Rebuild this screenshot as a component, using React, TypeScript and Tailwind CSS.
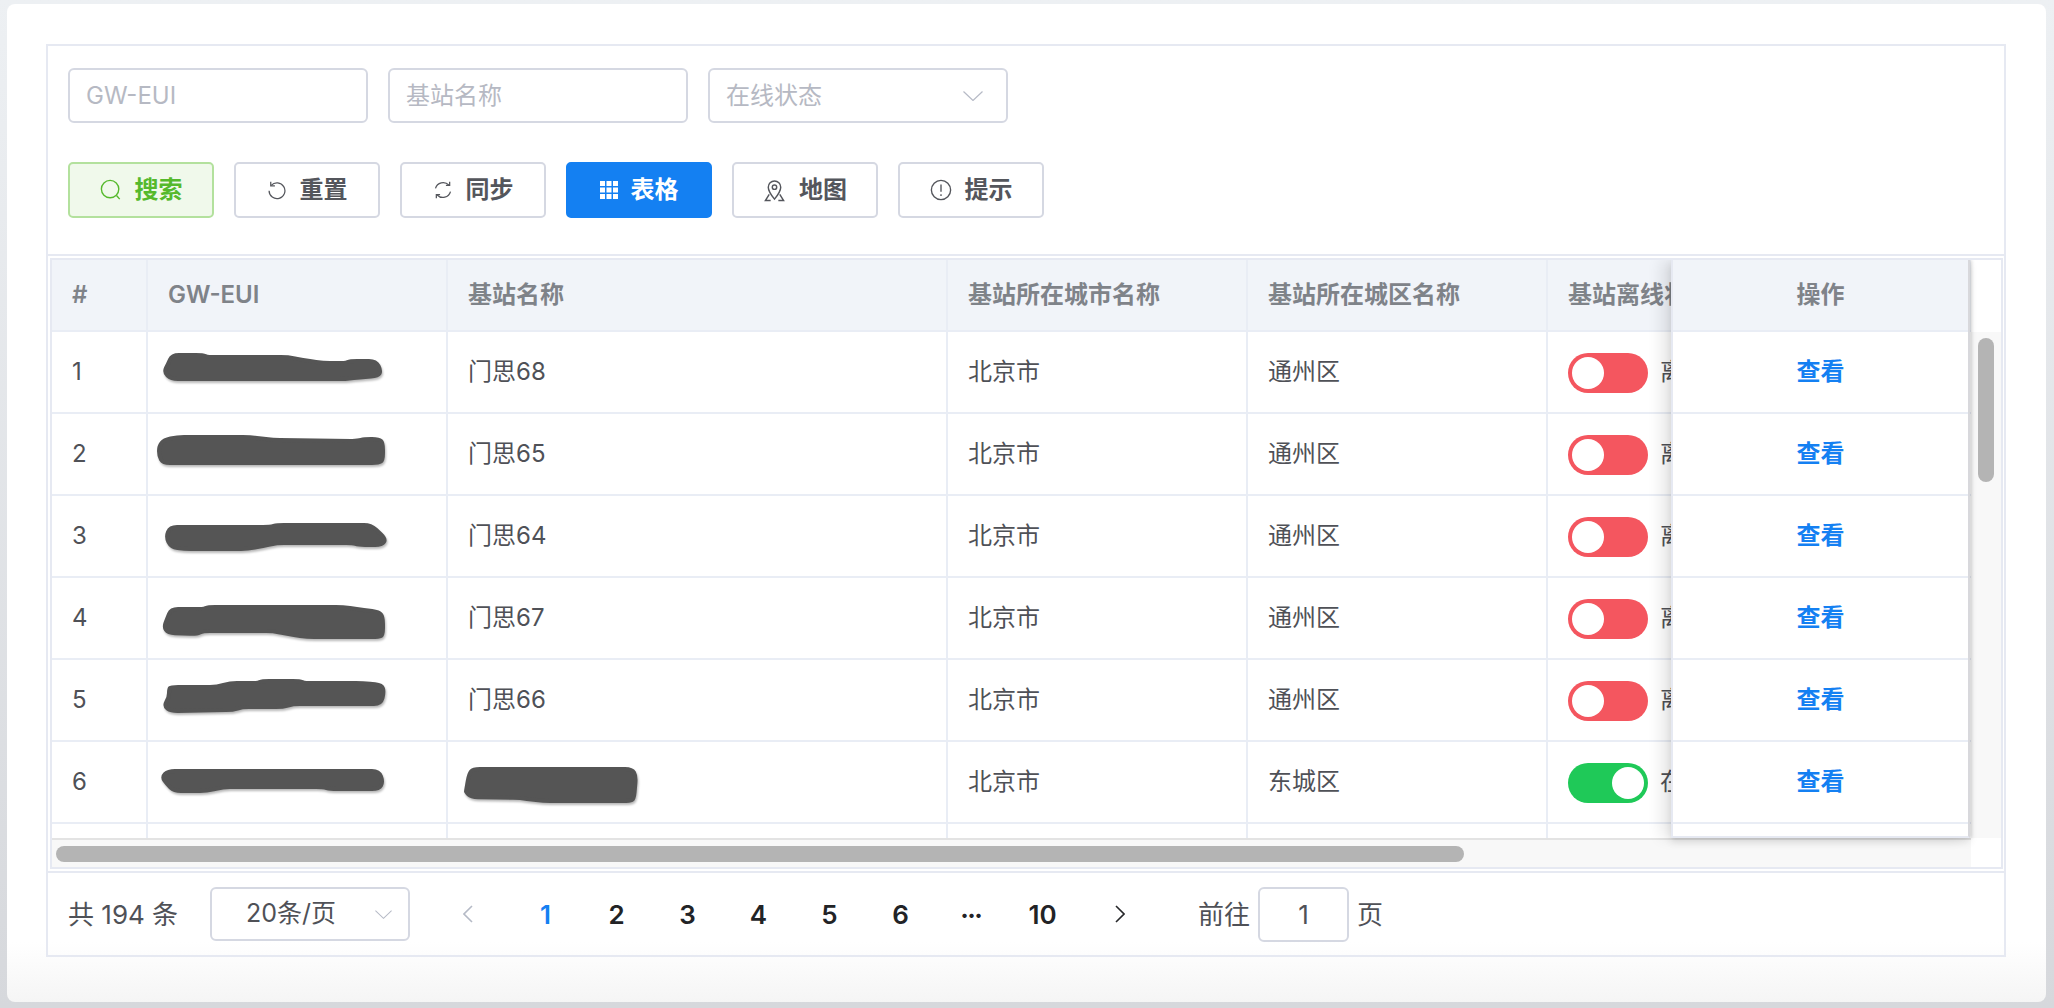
import type { ReactNode } from 'react'

const ROWS = [
  { no: 1, name: '门思68', city: '北京市', area: '通州区', online: false, eui: 'M172 356 L203 356 L208 358 L288 358 L303 361 L323 364 L345 364 L350 362 L376 362 L381 372 L378 377 L353 379 L346 380 L171 380 L164 373 L168 365 Z' },
  { no: 2, name: '门思65', city: '北京市', area: '通州区', online: false, eui: 'M159 447 L164 441 L177 438 L250 438 L273 441 L358 442 L364 440 L379 440 L383 444 L383 461 L379 464 L163 464 L159 457 Z' },
  { no: 3, name: '门思64', city: '北京市', area: '通州区', online: false, eui: 'M166 538 L170 528 L270 528 L277 526 L371 526 L386 540 L382 546 L358 546 L353 544 L277 544 L263 547 L248 550 L184 550 L171 548 Z' },
  { no: 4, name: '门思67', city: '北京市', area: '通州区', online: false, eui: 'M167 620 L171 610 L203 610 L208 608 L343 608 L357 610 L379 613 L383 618 L383 636 L379 638 L307 638 L287 635 L273 632 L203 632 L197 635 L168 634 L164 628 Z' },
  { no: 5, name: '门思66', city: '北京市', area: '通州区', online: false, eui: 'M169 698 L169 690 L171 688 L217 688 L230 684 L257 684 L262 682 L300 682 L305 684 L363 684 L382 686 L384 693 L381 705 L293 705 L283 708 L242 708 L233 711 L171 712 L164 707 Z' },
  { no: 6, name: '', city: '北京市', area: '东城区', online: true, eui: 'M162 778 L168 772 L379 772 L383 783 L379 790 L330 790 L323 788 L223 788 L207 792 L174 792 L167 785 Z' },
]

const NAME_BLOB = 'M466 792 L469 775 L473 770 L632 770 L636 777 L634 800 L630 802 L543 802 L520 799 L471 798 L466 793 Z'

const FONT = "font-['Inter','Noto_Sans_CJK_SC',sans-serif]"

// turn the traced polygon into a marker-like outline with soft corners
function soften(d: string) {
  const n = d.match(/[\d.]+/g)!.map(Number)
  const pts: [number, number][] = []
  for (let i = 0; i < n.length; i += 2) pts.push([n[i], n[i + 1]])
  const toward = (a: [number, number], b: [number, number]) => {
    const len = Math.hypot(b[0] - a[0], b[1] - a[1]) || 1
    const r = Math.min(7, len / 2)
    return [a[0] + ((b[0] - a[0]) * r) / len, a[1] + ((b[1] - a[1]) * r) / len]
  }
  return (
    pts
      .map((p, i) => {
        const s = toward(p, pts[(i - 1 + pts.length) % pts.length])
        const e = toward(p, pts[(i + 1) % pts.length])
        return `${i ? 'L' : 'M'}${s[0]} ${s[1]} Q${p[0]} ${p[1]} ${e[0]} ${e[1]}`
      })
      .join(' ') + ' Z'
  )
}

function Chevron({ className }: { className: string }) {
  return (
    <svg viewBox="0 0 20 10" fill="none" stroke="currentColor" strokeWidth="1.2" className={className}>
      <path d="M0.5 0.5 L10 9.5 L19.5 0.5" />
    </svg>
  )
}

function IconBox({ children, className }: { children: ReactNode; className: string }) {
  return (
    <svg viewBox="0 0 24 24" fill="none" stroke="currentColor" strokeWidth="1.5" className={className}>
      {children}
    </svg>
  )
}

const ToolButton = ({ icon, label, tone }: { icon: ReactNode; label: string; tone?: 'green' | 'blue' }) => {
  const style =
    tone === 'green'
      ? 'border-[#b3e19d] bg-[#f0f9eb] text-[#55b92c]'
      : tone === 'blue'
        ? 'border-[#1480f2] bg-[#1480f2] text-white'
        : 'border-[#d5d8e2] bg-white text-[#54565c]'
  return (
    <button className={`flex h-[56px] w-[146px] items-center justify-center gap-[13px] rounded-[5px] border-2 text-[24px] font-semibold ${style}`}>
      {icon}
      <span>{label}</span>
    </button>
  )
}

function Field({ placeholder }: { placeholder: string }) {
  return (
    <input
      placeholder={placeholder}
      className="h-[55px] w-[300px] rounded-[6px] border-2 border-[#d5d8e2] bg-white px-[16px] text-[24px] outline-none placeholder:text-[#b6b9c3]"
    />
  )
}

function Cell({ width, children }: { width: string; children?: ReactNode }) {
  return <div className={`flex h-full shrink-0 items-center border-r-2 border-[#e9edf5] pl-[20px] ${width}`}>{children}</div>
}

function Toggle({ online }: { online: boolean }) {
  return (
    <div className="flex items-center gap-[12px]">
      <div className={`mt-[2px] flex h-[40px] w-[80px] items-center rounded-full px-[4px] ${online ? 'justify-end bg-[#1fc958]' : 'justify-start bg-[#f4565f]'}`}>
        <div className="h-[32px] w-[32px] rounded-full bg-white" />
      </div>
      <span className="whitespace-nowrap">{online ? '在线' : '离线'}</span>
    </div>
  )
}

function Blob({ d, left, top, w }: { d: string; left: number; top: number; w: number }) {
  // viewBox is in page coordinates so the scribbles can be traced off the screenshot
  return (
    <svg viewBox={`${left} ${top} ${w} 80`} className="h-[80px] shrink-0 overflow-visible drop-shadow-[1px_2px_1px_rgba(0,0,0,0.28)]" width={w} height={80}>
      <path d={soften(d)} fill="#555555" stroke="#555555" strokeWidth="4" strokeLinejoin="round" />
    </svg>
  )
}

export default function App() {
  return (
    <div className={`h-[1008px] w-[2054px] overflow-hidden bg-linear-to-b from-[#edf0f3] to-[#d6d8dc] pl-[7px] pt-[4px] text-[#4f5157] ${FONT}`}>
      <div className="h-[998px] w-[2039px] rounded-[8px] bg-linear-to-b from-white from-[94%] to-[#f5f5f5] pl-[39px] pt-[40px]">
        <div className="h-[913px] w-[1960px] border-2 border-[#e6e9f2]">
          {/* filters */}
          <div className="h-[210px] border-b-2 border-[#e6e9f2] pl-[20px] pt-[22px]">
            <div className="flex gap-[20px]">
              <Field placeholder="GW-EUI" />
              <Field placeholder="基站名称" />
              <div className="flex h-[55px] w-[300px] items-center justify-between rounded-[6px] border-2 border-[#d5d8e2] pl-[16px] pr-[23px] text-[24px] text-[#b6b9c3]">
                <span>在线状态</span>
                <Chevron className="h-[10px] w-[20px] text-[#b6bac6]" />
              </div>
            </div>
            <div className="mt-[39px] flex gap-[20px]">
              <ToolButton
                tone="green"
                label="搜索"
                icon={
                  <IconBox className="h-[22px] w-[22px]">
                    <circle cx="11" cy="11" r="9.5" />
                    <path d="M18 18 L21.5 22" />
                  </IconBox>
                }
              />
              <ToolButton
                label="重置"
                icon={
                  <IconBox className="h-[20px] w-[20px]">
                    <path d="M5 6.5 A 9.5 9.5 0 1 1 2.5 13" />
                    <path d="M4.5 2 V7 H9.5" />
                  </IconBox>
                }
              />
              <ToolButton
                label="同步"
                icon={
                  <IconBox className="h-[20px] w-[20px]">
                    <path d="M3 10 A 9.5 9.5 0 0 1 19 6" />
                    <path d="M21 14 A 9.5 9.5 0 0 1 5 18" />
                    <path d="M20 2 V6.5 H15.5" />
                    <path d="M4 22 V17.5 H8.5" />
                  </IconBox>
                }
              />
              <ToolButton
                tone="blue"
                label="表格"
                icon={
                  <svg viewBox="0 0 18 18" fill="currentColor" className="h-[18px] w-[18px]">
                    <path d="M0 0h5v5H0zM6.5 0h5v5h-5zM13 0h5v5h-5zM0 6.5h5v5H0zM6.5 6.5h5v5h-5zM13 6.5h5v5h-5zM0 13h5v5H0zM6.5 13h5v5h-5zM13 13h5v5h-5z" />
                  </svg>
                }
              />
              <ToolButton
                label="地图"
                icon={
                  <IconBox className="h-[23px] w-[23px]">
                    <path d="M12 21 C8 16 5.5 12.5 5.5 8.5 A 6.5 6.5 0 0 1 18.5 8.5 C18.5 12.5 16 16 12 21 Z" />
                    <circle cx="12" cy="8.5" r="2.3" />
                    <path d="M6.5 16 L2.5 22.5 H8 M17.5 16 L21.5 22.5 H16" />
                  </IconBox>
                }
              />
              <ToolButton
                label="提示"
                icon={
                  <IconBox className="h-[22px] w-[22px]">
                    <circle cx="12" cy="12" r="10.5" />
                    <path d="M12 6 V14" />
                    <path d="M12 16.5 V18.5" />
                  </IconBox>
                }
              />
            </div>
          </div>

          {/* table */}
          <div className="relative ml-[2px] mr-[1px] mt-[2px] h-[611px] overflow-hidden border-2 border-[#e6e9f2] text-[24px]">
            <div className="flex h-[72px] items-center border-b-2 border-[#e9edf5] bg-[#f1f4f9] font-semibold text-[#7f8389]">
              <Cell width="w-[96px]">#</Cell>
              <Cell width="w-[300px]">GW-EUI</Cell>
              <Cell width="w-[500px]">基站名称</Cell>
              <Cell width="w-[300px]">基站所在城市名称</Cell>
              <Cell width="w-[300px]">基站所在城区名称</Cell>
              <Cell width="w-[300px]">基站离线状态</Cell>
            </div>
            <div className="h-[506px] overflow-hidden">
              {ROWS.map((r) => (
                <div key={r.no} className="flex h-[82px] border-b-2 border-[#e9edf5]">
                  <Cell width="w-[96px]">{r.no}</Cell>
                  <div className="flex h-full w-[300px] shrink-0 items-center border-r-2 border-[#e9edf5]">
                    <Blob d={r.eui} left={148} top={333 + (r.no - 1) * 82} w={298} />
                  </div>
                  <Cell width="w-[500px]">
                    {r.name || <div className="-ml-[20px]"><Blob d={NAME_BLOB} left={448} top={743} w={498} /></div>}
                  </Cell>
                  <Cell width="w-[300px]">{r.city}</Cell>
                  <Cell width="w-[300px]">{r.area}</Cell>
                  <Cell width="w-[300px]">
                    <Toggle online={r.online} />
                  </Cell>
                </div>
              ))}
              <div className="flex h-[14px]">
                <Cell width="w-[96px]" />
                <Cell width="w-[300px]" />
                <Cell width="w-[500px]" />
                <Cell width="w-[300px]" />
                <Cell width="w-[300px]" />
              </div>
            </div>
            {/* horizontal scrollbar */}
            <div className="h-[29px] border-t-2 border-[#e3e3e3] bg-[#f8f8f8] pl-[4px] pt-[6px]">
              <div className="h-[16px] w-[1408px] rounded-full bg-[#b4b4b4]" />
            </div>

            {/* vertical scrollbar, white above and below its track */}
            <div className="absolute bottom-0 right-0 top-0 w-[30px] bg-white">
              <div className="h-[72px]" />
              <div className="h-[506px] bg-[#f8f8f8] pl-[7px] pt-[6px]">
                <div className="h-[144px] w-[16px] rounded-full bg-[#b4b4b4]" />
              </div>
            </div>

            {/* fixed column */}
            <div className="absolute left-[1619px] top-0 h-[578px] w-[299px] border-b-2 border-l-2 border-r-2 border-[#e6e9f2] border-r-[#d8d8dc] bg-white shadow-[-10px_0_14px_rgba(0,0,0,0.09),2px_0_3px_rgba(0,0,0,0.12),0_4px_8px_rgba(0,0,0,0.1)]">
              <div className="flex h-[72px] items-center justify-center border-b-2 border-[#e9edf5] bg-[#f1f4f9] font-semibold text-[#7f8389]">操作</div>
              {ROWS.map((r) => (
                <div key={r.no} className="flex h-[82px] items-center justify-center border-b-2 border-[#e9edf5] font-semibold text-[#1480f2]">
                  查看
                </div>
              ))}
            </div>
          </div>

          {/* pagination */}
          <div className="mt-[2px] flex h-[84px] items-center border-t-2 border-[#e6e9f2] pl-[20px] text-[26px]">
            <span className="w-[112px] whitespace-nowrap">共 194 条</span>
            <div className="ml-[30px] flex h-[54px] w-[200px] items-center rounded-[6px] border-2 border-[#d5d8e2] pl-[34px] pr-[16px] text-[25px]">
              <span className="flex-1 whitespace-nowrap">20条/页</span>
              <Chevron className="h-[9px] w-[17px] text-[#b6bac6]" />
            </div>
            <div className="ml-[26px] mr-[10px] flex w-[64px] justify-center">
              <svg viewBox="0 0 10 18" fill="none" stroke="#b5bac6" strokeWidth="1.6" className="h-[18px] w-[10px]"><path d="M9 1 L1 9 L9 17" /></svg>
            </div>
            {['1', '2', '3', '4', '5', '6', '•••', '10'].map((p) => (
              <div key={p} className={`flex w-[71px] justify-center font-semibold ${p === '1' ? 'text-[#1480f2]' : 'text-[#222326]'} ${p === '•••' ? 'text-[14px]' : ''}`}>{p}</div>
            ))}
            <div className="flex w-[84px] justify-center">
              <svg viewBox="0 0 10 18" fill="none" stroke="#26272a" strokeWidth="1.6" className="h-[18px] w-[10px]"><path d="M1 1 L9 9 L1 17" /></svg>
            </div>
            <span className="ml-[36px]">前往</span>
            <input defaultValue="1" className="mx-[8px] h-[55px] w-[91px] rounded-[6px] border-2 border-[#d5d8e2] text-center outline-none" />
            <span>页</span>
          </div>
        </div>
      </div>
    </div>
  )
}
